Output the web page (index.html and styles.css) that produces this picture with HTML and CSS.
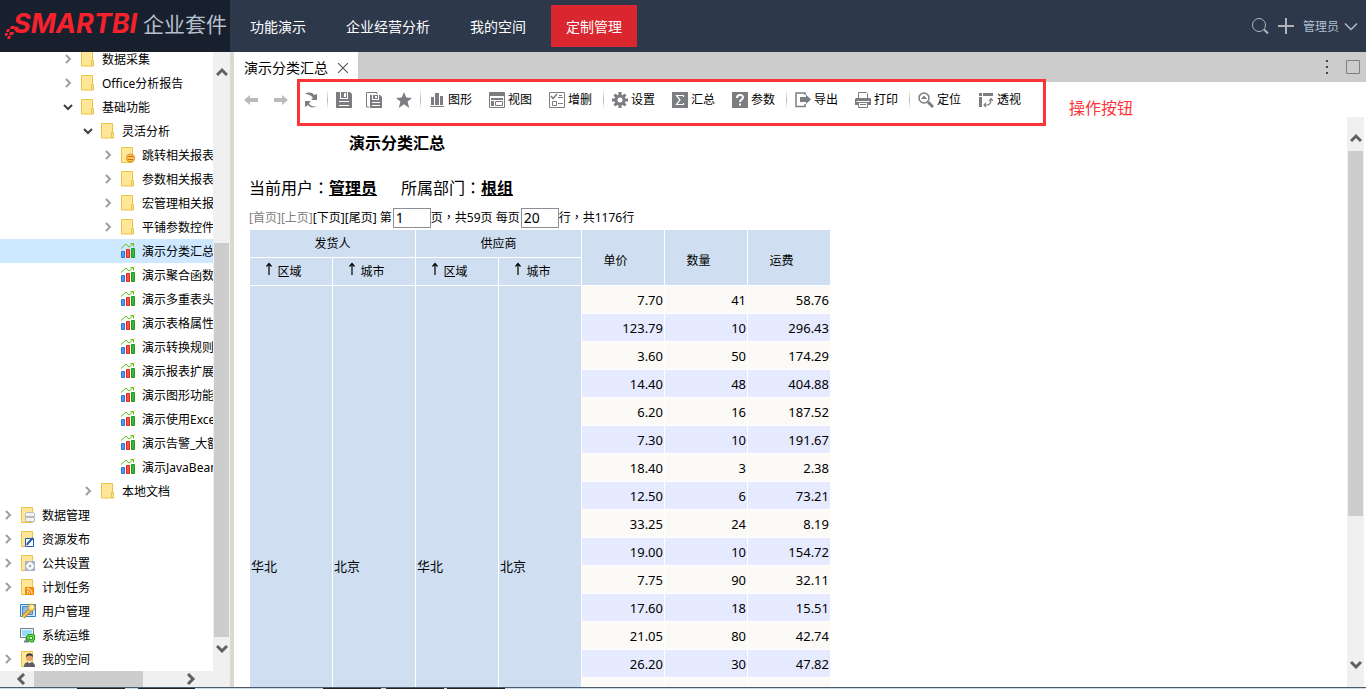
FILE: index.html
```html
<!DOCTYPE html>
<html lang="zh-CN">
<head>
<meta charset="utf-8">
<title>演示分类汇总</title>
<link rel="stylesheet" href="styles.css">
</head>
<body>
<svg class="defs" aria-hidden="true">
  <symbol id="right" viewBox="0 0 16 16"><path d="M6 4l4 4-4 4" fill="none" stroke="#a0a0a0" stroke-width="2"/></symbol>
  <symbol id="down" viewBox="0 0 16 16"><path d="M4 6l4 4 4-4" fill="none" stroke="#404040" stroke-width="2"/></symbol>
  <symbol id="folder" viewBox="0 0 16 16"><path d="M1.500 .5h11v9.500h1v5h-12z" fill="#ffe699" stroke="#e9c343"/><path d="M11.500 14v-4.500h2v5h-2" fill="#ffe699" stroke="#e9c343"/></symbol>
  <symbol id="sheet" viewBox="0 0 16 16"><path d="M1.500 .5h11v15h-11z" fill="#ffe699" stroke="#e9c343"/></symbol>
  <symbol id="chart" viewBox="0 0 16 16"><path d="M1.500 8.500h3v6h-3z" fill="#4f9df0" stroke="#2f74c9"/><path d="M6.500 6.500h3v8h-3z" fill="#ff5548" stroke="#dc2b20"/><path d="M11.500 5.500h3v9h-3z" fill="#3cb53c" stroke="#1f981f"/><path d="M1 5.500L6 1l3 3 4.500-3.500M10.500 .5h3v3" fill="none" stroke="#65c21a"/></symbol>
  <symbol id="sb-up" viewBox="0 0 12 12"><path d="M1 9l5-5 5 5" fill="none" stroke="#606060" stroke-width="3"/></symbol>
  <symbol id="sb-down" viewBox="0 0 12 12"><path d="M1 3l5 5 5-5" fill="none" stroke="#606060" stroke-width="3"/></symbol>
  <symbol id="sb-left" viewBox="0 0 12 12"><path d="M9 1L4 6l5 5" fill="none" stroke="#606060" stroke-width="3"/></symbol>
  <symbol id="sb-right" viewBox="0 0 12 12"><path d="M3 1l5 5-5 5" fill="none" stroke="#606060" stroke-width="3"/></symbol>
  <symbol id="asc" viewBox="0 0 8 14"><path d="M4 13V2M1.500 4.500L4 1.500l2.500 3" fill="none" stroke="#000" stroke-width="1.200"/></symbol>
</svg>

<header class="top">
  <div class="brand">
    <svg class="brand-mark" viewBox="0 0 10 13" aria-hidden="true"><g fill="#f5222d"><path d="M6 0h4L9 3H5zM2 3h3L4 6H1zM5 6h4L8 9H4zM0 7h3l-1 3H0zM3 10h3l-1 3H2z"/></g></svg>
    <span class="brand-name">SMARTBI</span><span class="brand-suite">企业套件</span>
  </div>
  <nav class="nav">
    <a href="#">功能演示</a>
    <a href="#">企业经营分析</a>
    <a href="#">我的空间</a>
    <a href="#" class="active">定制管理</a>
  </nav>
  <div class="account">
    <button class="plain" aria-label="搜索"><svg width="18" height="18" viewBox="0 0 18 18" fill="none" stroke="#b3b3b8"><circle cx="8" cy="8" r="6.500"/><path d="M13 12.500l4 4" stroke-width="2"/></svg></button>
    <button class="plain" aria-label="新建"><svg width="16" height="16" viewBox="0 0 16 16" stroke="#b3b3b8" stroke-width="2"><path d="M8 0v16M0 8h16"/></svg></button>
    <button class="plain user">管理员<svg width="14" height="10" viewBox="0 0 14 10" fill="none" stroke="#b0bccb" stroke-width="1.500"><path d="M1 1.500l6 6 6-6"/></svg></button>
  </div>
</header>

<main class="work">
  <aside class="side">
    <ul class="tree">
      <li class="l3"><button class="plain" aria-label="展开"><svg><use href="#right"/></svg></button><svg><use href="#folder"/></svg><a href="#">数据采集</a></li>
      <li class="l3"><button class="plain" aria-label="展开"><svg><use href="#right"/></svg></button><svg><use href="#folder"/></svg><a href="#">Office分析报告</a></li>
      <li class="l3"><button class="plain" aria-label="收起"><svg><use href="#down"/></svg></button><svg><use href="#folder"/></svg><a href="#">基础功能</a></li>
      <li class="l4"><button class="plain" aria-label="收起"><svg><use href="#down"/></svg></button><svg><use href="#folder"/></svg><a href="#">灵活分析</a></li>
      <li class="l5"><button class="plain" aria-label="展开"><svg><use href="#right"/></svg></button><svg viewBox="0 0 16 16"><use href="#sheet"/><circle cx="10.500" cy="11" r="4" fill="#ffc550" stroke="#dc8a25"/><path d="M8 9.500h5M8 12.500h5" stroke="#c9731a"/></svg><a href="#">跳转相关报表</a></li>
      <li class="l5"><button class="plain" aria-label="展开"><svg><use href="#right"/></svg></button><svg><use href="#folder"/></svg><a href="#">参数相关报表</a></li>
      <li class="l5"><button class="plain" aria-label="展开"><svg><use href="#right"/></svg></button><svg><use href="#folder"/></svg><a href="#">宏管理相关报</a></li>
      <li class="l5"><button class="plain" aria-label="展开"><svg><use href="#right"/></svg></button><svg><use href="#folder"/></svg><a href="#">平铺参数控件</a></li>
      <li class="l5 leaf selected"><svg><use href="#chart"/></svg><a href="#">演示分类汇总</a></li>
      <li class="l5 leaf"><svg><use href="#chart"/></svg><a href="#">演示聚合函数</a></li>
      <li class="l5 leaf"><svg><use href="#chart"/></svg><a href="#">演示多重表头</a></li>
      <li class="l5 leaf"><svg><use href="#chart"/></svg><a href="#">演示表格属性</a></li>
      <li class="l5 leaf"><svg><use href="#chart"/></svg><a href="#">演示转换规则</a></li>
      <li class="l5 leaf"><svg><use href="#chart"/></svg><a href="#">演示报表扩展</a></li>
      <li class="l5 leaf"><svg><use href="#chart"/></svg><a href="#">演示图形功能</a></li>
      <li class="l5 leaf"><svg><use href="#chart"/></svg><a href="#">演示使用Exce</a></li>
      <li class="l5 leaf"><svg><use href="#chart"/></svg><a href="#">演示告警_大额</a></li>
      <li class="l5 leaf"><svg><use href="#chart"/></svg><a href="#">演示JavaBean</a></li>
      <li class="l4"><button class="plain" aria-label="展开"><svg><use href="#right"/></svg></button><svg><use href="#folder"/></svg><a href="#">本地文档</a></li>
      <li><button class="plain" aria-label="展开"><svg><use href="#right"/></svg></button><svg viewBox="0 0 16 16"><use href="#sheet"/><path d="M6.500 5.500h7l1 1v3h-9v-3zM5.500 10.500h9v4h-9z" fill="#f4f4f4" stroke="#b9b9b9"/></svg><a href="#">数据管理</a></li>
      <li><button class="plain" aria-label="展开"><svg><use href="#right"/></svg></button><svg viewBox="0 0 16 16"><use href="#sheet"/><path d="M5.500 7.500h8v8h-8z" fill="#fff" stroke="#2358b8"/><path d="M7 14l1-2 5-5" fill="none" stroke="#2358b8" stroke-width="2"/></svg><a href="#">资源发布</a></li>
      <li><button class="plain" aria-label="展开"><svg><use href="#right"/></svg></button><svg viewBox="0 0 16 16"><use href="#sheet"/><path d="M5 6h10v10H5z" fill="#a5b4c8"/><circle cx="10" cy="11" r="2.500" fill="none" stroke="#fff" stroke-width="2"/><path d="M10 7v2M10 13v2M6 11h2M12 11h2" stroke="#fff" stroke-width="2"/></svg><a href="#">公共设置</a></li>
      <li><button class="plain" aria-label="展开"><svg><use href="#right"/></svg></button><svg viewBox="0 0 16 16"><use href="#sheet"/><path d="M5 8h9v8H5z" fill="#f78c00"/><path d="M7 9.500c3 0 5 2 5 5M7 12c1.500 0 2.500 1 2.500 2.500" fill="none" stroke="#fff"/><path d="M7 13.500h1v1H7z" fill="#fff"/></svg><a href="#">计划任务</a></li>
      <li class="leaf"><svg viewBox="0 0 16 16"><path d="M.5 1.500h15v12H.5z" fill="#d9ebfa" stroke="#1d87cf"/><path d="M2.500 3.500h10v8h-10z" fill="#8fbaf0" stroke="#4b83c4"/><path d="M3 14l7-7" stroke="#bd861c" stroke-width="4"/><path d="M3 14l7-7" stroke="#f5c75c" stroke-width="2"/><circle cx="11.500" cy="4.500" r="3.500" fill="#ffdc79" stroke="#cf9526"/><circle cx="12" cy="4" r="1" fill="#fff"/></svg><a href="#">用户管理</a></li>
      <li class="leaf"><svg viewBox="0 0 16 16"><path d="M.5 1.500h13v9H.5z" fill="#eef6fb" stroke="#71808e"/><path d="M2 3h10v6H2z" fill="#99dcfa"/><path d="M4 14.500h5M6.500 11v3" stroke="#71808e" stroke-width="2"/><path d="M8 7.500h5.500v-1h0v1.500h1v5h-1v2h-3v-1H8v-2H6.500v-3H8z" fill="#70dc45" stroke="#279e1c"/><path d="M9.500 9.500h3v3h-3z" fill="#eaffdf" stroke="#279e1c"/></svg><a href="#">系统运维</a></li>
      <li><button class="plain" aria-label="展开"><svg><use href="#right"/></svg></button><svg viewBox="0 0 16 16"><use href="#sheet"/><path d="M4 16c0-4 2-5 5.500-5s5.500 1 5.500 5z" fill="#52606f"/><circle cx="9.500" cy="6.500" r="3.500" fill="#e5a06b"/><path d="M6 6c-.5-5 7.500-5 7 0L11 4.500H8z" fill="#333"/><path d="M8 11l1.500 2 1.500-2" fill="#fff"/><path d="M9 12h1v3H9z" fill="#d9372a"/></svg><a href="#">我的空间</a></li>
    </ul>
    <div class="vbar side-v" aria-hidden="true"><span class="cap first"><svg><use href="#sb-up"/></svg></span><span class="space"></span><span class="thumb"></span><span class="cap last"><svg><use href="#sb-down"/></svg></span></div>
    <div class="hbar" aria-hidden="true"><span class="cap first"><svg><use href="#sb-left"/></svg></span><span class="thumb"></span><span class="space"></span><span class="cap last"><svg><use href="#sb-right"/></svg></span></div>
  </aside>

  <section class="content">
    <div class="tabs">
      <div class="tab">演示分类汇总<button class="plain" aria-label="关闭"><svg width="10" height="10" viewBox="0 0 10 10" stroke="#555" stroke-width="1.200"><path d="M0 0l10 10M10 0L0 10"/></svg></button></div>
      <div class="tab-tools">
        <button class="plain" aria-label="更多"><svg width="4" height="14" viewBox="0 0 4 14" fill="#444"><path d="M1 0h2v2H1zM1 6h2v2H1zM1 12h2v2H1z"/></svg></button>
        <button class="plain" aria-label="最大化"><svg width="14" height="14" viewBox="0 0 14 14"><path d="M.5 .5h13v13H.5z" fill="none" stroke="#808080"/></svg></button>
      </div>
    </div>

    <div class="toolbar">
      <button class="plain" aria-label="后退"><svg viewBox="0 0 16 16"><path d="M1 8l6-5v3h8v4H7v3z" fill="#b9babc"/></svg></button>
      <button class="plain" aria-label="前进"><svg viewBox="0 0 16 16"><path d="M15 8L9 3v3H1v4h8v3z" fill="#b9babc"/></svg></button>
      <button class="plain" aria-label="刷新"><svg viewBox="0 0 16 16" fill="#7b7d81"><path d="M2 2c3-2 7-2 9 1l3-1v6H8l2-2C8 3 5 2 2 2zM14 14c-3 2-7 2-9-1l-3 2V9h6l-2 2c1 3 4 4 8 3z"/></svg></button>
      <i class="sep"></i>
      <button class="plain" aria-label="保存"><svg viewBox="0 0 16 16"><path d="M0 0h4v7h8V0h2l2 2v14H0z" fill="#7b7d81"/><path d="M5 0h6v6H5z" fill="#7b7d81"/><path d="M8 1h2v4H8z" fill="#fff"/><path d="M3 9.500h10M3 13.500h10" stroke="#fff"/></svg></button>
      <button class="plain" aria-label="另存为"><svg viewBox="0 0 16 16"><path d="M3 15H.500V.5H11V2" fill="none" stroke="#7b7d81"/><path d="M4 3h2v5h7V3h1l2 2v11H4z" fill="#7b7d81"/><path d="M7 3h5v4H7z" fill="#7b7d81"/><path d="M9 4h2v2H9z" fill="#fff"/><path d="M6 10.500h8M6 13.500h8" stroke="#fff"/></svg></button>
      <button class="plain" aria-label="收藏"><svg viewBox="0 0 16 16"><path d="M8 0l2.300 5.600 5.700.3-4.400 3.700L13.200 16 8 12.300 2.800 16l1.600-6.400L0 5.900l5.700-.3z" fill="#7b7d81"/></svg></button>
      <i class="sep"></i>
      <button class="plain"><svg viewBox="0 0 16 16" fill="#7b7d81"><path d="M2 5h3v8H2zM6 1h4v12H6zM11 4h3v9h-3zM1 14h14v1H1z"/></svg>图形</button>
      <button class="plain"><svg viewBox="0 0 16 16"><path d="M.5 .5h15v15H.5z" fill="none" stroke="#7b7d81"/><path d="M1 1h14v3H1z" fill="#7b7d81"/><path d="M2 6h12v2H2zM2 9h3v5H2z" fill="#7b7d81"/><path d="M6.500 9.500h7v4h-7z" fill="none" stroke="#7b7d81"/></svg>视图</button>
      <button class="plain"><svg viewBox="0 0 16 16" fill="none" stroke="#7b7d81"><path d="M.5 .5h15v15H.5z"/><path d="M2 4l2 2.500L8 2" stroke-width="1.500"/><path d="M9 5.500h5M3.500 9.500h4v4h-4zM9 11.500h5M10 3.500h3"/></svg>增删</button>
      <i class="sep"></i>
      <button class="plain"><svg viewBox="0 0 16 16" stroke="#7b7d81" fill="none"><circle cx="8" cy="8" r="4" stroke-width="3"/><path d="M8 0v4M8 12v4M0 8h4M12 8h4M2.500 2.500L5 5M11 11l2.500 2.500M13.500 2.500L11 5M5 11l-2.500 2.500" stroke-width="3"/></svg>设置</button>
      <button class="plain"><svg viewBox="0 0 16 16"><path d="M0 0h16v16H0z" fill="#7b7d81"/><path d="M11.500 5V3.500h-7L8 7.800l-3.500 4.700h7V11" fill="none" stroke="#fff" stroke-width="1.200"/></svg>汇总</button>
      <button class="plain"><svg viewBox="0 0 16 16"><path d="M0 0h16v16H0z" fill="#7b7d81"/><path d="M5 6c0-4 6-4 6-.5C11 7.500 8 7.500 8 10M8 11.500v2" fill="none" stroke="#fff" stroke-width="2"/></svg>参数</button>
      <i class="sep"></i>
      <button class="plain"><svg viewBox="0 0 16 16"><path d="M10 3V1H1v13.500h9V12" fill="none" stroke="#7b7d81" stroke-width="1.500"/><path d="M5 5h6V2.500L16 7.500 11 12V10H5z" fill="#7b7d81"/></svg>导出</button>
      <button class="plain"><svg viewBox="0 0 16 16"><path d="M3.500 6V.5h8l1 1V6" fill="#fff" stroke="#7b7d81"/><path d="M1 6h14l1 1v6H0V7z" fill="#7b7d81"/><path d="M1.500 9.500h13" stroke="#fff"/><path d="M3.500 10.500h9v5h-9z" fill="#fff" stroke="#7b7d81"/><path d="M5 12.500h6" stroke="#7b7d81"/></svg>打印</button>
      <i class="sep"></i>
      <button class="plain"><svg viewBox="0 0 16 16" fill="none" stroke="#7b7d81"><circle cx="6" cy="6" r="5" stroke-width="1.500"/><path d="M10 10l5 5" stroke-width="3"/><path d="M3 7h6L6 3.500z" fill="#7b7d81" stroke="none"/></svg>定位</button>
      <button class="plain"><svg viewBox="0 0 16 16"><path d="M1 1h3v3H1zM5 1h10v3H5zM1 5h3v10H1z" fill="#7b7d81"/><path d="M6 13h3c3 0 4-2 4-6M8 11l-2 2 2 2M11 9l2-2.500L15 9" fill="none" stroke="#7b7d81" stroke-width="1.200"/></svg>透视</button>
      <div class="frame"></div>
      <span class="frame-note">操作按钮</span>
    </div>

    <div class="pane">
      <div class="report">
        <h1>演示分类汇总</h1>
        <p class="info"><span>当前用户<span class="mid" lang="zh-TW">：</span><b>管理员</b></span><span>所属部门<span class="mid" lang="zh-TW">：</span><b>根组</b></span></p>
        <div class="pager"><a class="off">[首页]</a><a class="off">[上页]</a><a href="#">[下页]</a><a href="#">[尾页]</a><label for="page">&nbsp;第</label><input id="page" value="1"><span>页<span class="mid" lang="zh-TW">，</span>共59页&nbsp;</span><label for="size">每页</label><input id="size" value="20"><span>行<span class="mid" lang="zh-TW">，</span>共1176行</span></div>
        <table>
          <thead>
            <tr><th colspan="2">发货人</th><th colspan="2">供应商</th><th rowspan="2" class="sort tall">单价</th><th rowspan="2" class="sort tall">数量</th><th rowspan="2" class="sort tall">运费</th></tr>
            <tr><th class="sort"><svg><use href="#asc"/></svg>区域</th><th class="sort"><svg><use href="#asc"/></svg>城市</th><th class="sort"><svg><use href="#asc"/></svg>区域</th><th class="sort"><svg><use href="#asc"/></svg>城市</th></tr>
          </thead>
          <tbody>
            <tr><td class="dim" rowspan="20">华北</td><td class="dim" rowspan="20">北京</td><td class="dim" rowspan="20">华北</td><td class="dim" rowspan="20">北京</td><td>7.70</td><td>41</td><td>58.76</td></tr>
            <tr><td>123.79</td><td>10</td><td>296.43</td></tr>
            <tr><td>3.60</td><td>50</td><td>174.29</td></tr>
            <tr><td>14.40</td><td>48</td><td>404.88</td></tr>
            <tr><td>6.20</td><td>16</td><td>187.52</td></tr>
            <tr><td>7.30</td><td>10</td><td>191.67</td></tr>
            <tr><td>18.40</td><td>3</td><td>2.38</td></tr>
            <tr><td>12.50</td><td>6</td><td>73.21</td></tr>
            <tr><td>33.25</td><td>24</td><td>8.19</td></tr>
            <tr><td>19.00</td><td>10</td><td>154.72</td></tr>
            <tr><td>7.75</td><td>90</td><td>32.11</td></tr>
            <tr><td>17.60</td><td>18</td><td>15.51</td></tr>
            <tr><td>21.05</td><td>80</td><td>42.74</td></tr>
            <tr><td>26.20</td><td>30</td><td>47.82</td></tr>
            <tr><td></td><td></td><td></td></tr>
            <tr><td></td><td></td><td></td></tr>
            <tr><td></td><td></td><td></td></tr>
            <tr><td></td><td></td><td></td></tr>
            <tr><td></td><td></td><td></td></tr>
            <tr><td></td><td></td><td></td></tr>
          </tbody>
        </table>
      </div>
      <div class="vbar pane-v" aria-hidden="true"><span class="cap first"><svg><use href="#sb-up"/></svg></span><span class="thumb"></span><span class="space"></span><span class="cap last"><svg><use href="#sb-down"/></svg></span></div>
    </div>
  </section>
</main>
<footer class="edge"></footer>
</body>
</html>
```

FILE: styles.css
```css
* { box-sizing: border-box; }

body {
  margin: 0;
  height: 100vh;
  display: flex;
  flex-direction: column;
  overflow: hidden;
  background: #fff;
  color: #000;
  font: 12px/16px "Noto Sans", "Noto Sans CJK SC", sans-serif;
}

a { color: inherit; text-decoration: none; }
svg { display: block; flex: none; }
.defs { position: absolute; width: 0; height: 0; }

.plain {
  display: flex;
  align-items: center;
  margin: 0;
  padding: 0;
  border: 0;
  background: none;
  color: inherit;
  font: inherit;
  white-space: nowrap;
}

/* Top bar */
.top {
  display: flex;
  flex: none;
  height: 52px;
  background: #2d384b;
}

.brand {
  display: flex;
  align-items: center;
  width: 230px;
  padding: 0 0 4px 5px;
  background: #17202c;
  white-space: nowrap;
}

.brand-mark { width: 10px; height: 13px; margin: 16px -2px 0 0; }
.brand-name { width: 130px; color: #f5222d; font: italic 700 27px/48px Inter, sans-serif; }
.brand-suite { color: #b6bfcd; font-size: 21px; line-height: 48px; }

.nav {
  display: flex;
  align-items: center;
  gap: 10px;
  padding-left: 5px;
  color: #fff;
  font-size: 14px;
}

.nav a { height: 42px; padding: 1px 15px 0; line-height: 42px; }
.nav .active { background: #d9262f; }

.account {
  display: flex;
  align-items: center;
  gap: 9px;
  margin-left: auto;
  padding-right: 8px;
  color: #b0c0d2;
}

.user { gap: 5px; padding-top: 1px; }

/* Work area */
.work {
  flex: 1;
  min-height: 0;
  display: grid;
  grid-template-columns: 230px 1fr;
}

.side {
  display: grid;
  grid-template: minmax(0, 1fr) 16px / 213px 17px;
  min-height: 0;
}

.tree {
  margin: 0;
  padding: 0;
  overflow: hidden;
  list-style: none;
  white-space: nowrap;
}

.tree li {
  display: flex;
  align-items: center;
  height: 24px;
}

.tree li:first-child { margin-top: -5px; }
.tree svg { width: 16px; height: 16px; }
.tree button { margin-right: 4px; }
.tree a { padding: 2px 0 0 6px; }
.tree .leaf { padding-left: 20px; }
.tree .l3 { padding-left: 60px; }
.tree .l4 { padding-left: 80px; }
.tree .l5 { padding-left: 100px; }
.tree .l5.leaf { padding-left: 120px; }
.tree .selected { background: #cde8ff; }

/* Scroll bars */
.vbar, .hbar { display: flex; background: #f0f0f0; }
.vbar { flex-direction: column; width: 17px; padding: 0 1px; }
.hbar { grid-column: 1 / -1; padding-right: 17px; }
.cap { flex: none; display: flex; align-items: center; justify-content: center; }
.cap svg { width: 12px; height: 12px; }
.thumb { background: #cdcdcd; }
.side-v .first { height: 40px; }
.side-v .space { flex: 151; }
.side-v .thumb { flex: 394; }
.side-v .last { height: 34px; padding-bottom: 10px; }
.hbar .first { width: 34px; padding-left: 8px; }
.hbar .thumb { flex: 109; }
.hbar .space { flex: 26; }
.hbar .last { width: 44px; }
.pane-v .first { height: 34px; padding-top: 8px; }
.pane-v .thumb { flex: 364; }
.pane-v .space { flex: 127; }
.pane-v .last { height: 44px; }

/* Content */
.content {
  display: flex;
  flex-direction: column;
  min-width: 0;
  min-height: 0;
  border-left: 4px solid #dcd9d3;
}

.tabs {
  display: flex;
  flex: none;
  justify-content: space-between;
  height: 30px;
  background: #ccc;
}

.tab {
  display: flex;
  align-items: center;
  gap: 10px;
  padding: 1px 10px 0;
  background: #fff;
  font-size: 14px;
}

.tab-tools { display: flex; align-items: center; gap: 17px; padding-right: 6px; }

.toolbar {
  position: relative;
  display: flex;
  flex: none;
  height: 35px;
  padding-left: 2px;
}

.toolbar button { gap: 3px; width: 60px; padding-left: 7px; }
.toolbar button[aria-label] { width: 30px; }
.toolbar svg { width: 16px; height: 16px; }

.sep {
  width: 3px;
  margin: 8px 0;
  border-left: 1px solid #fff;
  border-right: 1px solid #fff;
  background: linear-gradient(#fff, #b4b4b8, #fff);
}

.frame {
  position: absolute;
  top: -3px;
  left: 63px;
  width: 749px;
  height: 47px;
  border: 3px solid #fc3438;
}

.frame-note {
  position: absolute;
  top: 14px;
  left: 835px;
  color: #fc3438;
  font-size: 16px;
  line-height: 24px;
}

.pane {
  flex: 1;
  display: flex;
  justify-content: space-between;
  min-height: 0;
  padding-right: 2px;
}

.report { overflow: hidden; flex: 1; padding: 14px 0 0 15px; }

h1 {
  margin: 0 0 21px;
  padding-left: 100px;
  font-size: 16px;
  line-height: 24px;
}

.info {
  display: flex;
  gap: 24px;
  margin: 0 0 8px;
  font-size: 16px;
  line-height: 24px;
}

.info b { text-decoration: underline; }

/* Full-width punctuation centred in its box */
.mid { font-family: "Noto Sans CJK TC", sans-serif; line-height: 16px; }

.pager { display: flex; align-items: center; height: 20px; margin-bottom: 2px; line-height: 20px; }
.off { color: #808080; }

.pager input {
  width: 38px;
  height: 20px;
  margin-left: 1px;
  padding: 0 2px;
  border: 1px solid #8a8f96;
  font: inherit;
  font-size: 14px;
}

table {
  width: 581px;
  margin-left: 1px;
  table-layout: fixed;
  border-collapse: separate;
  border-spacing: 0;
}

th, td {
  height: 28px;
  padding: 0 1px;
  border: solid #fff;
  border-width: 0 1px 1px 0;
  line-height: 20px;
}

th { padding-top: 1px; background: #cfdef0; font-weight: normal; font-size: 12px; }
.sort { padding-right: 16px; }
.tall { padding-top: 6px; }
th svg { display: inline-block; width: 8px; height: 14px; margin-right: 4px; }
td { background: #fbfaf7; font-size: 13px; text-align: right; }
tr:nth-child(even) td { background: #e6eafe; }
tr .dim { background: #cfdef0; text-align: left; }

.edge {
  flex: none;
  height: 2px;
  border-top: 1px solid #4c5a6b;
  background: linear-gradient(90deg, #c6dcf1 77px, #222 77px 125px, #c6dcf1 125px 138px, #222 138px 195px, #c6dcf1 195px 323px, #222 323px 381px, #c6dcf1 381px 386px, #222 386px 444px, #c6dcf1 444px 447px, #222 447px 505px, #c6dcf1 505px);
}
```
